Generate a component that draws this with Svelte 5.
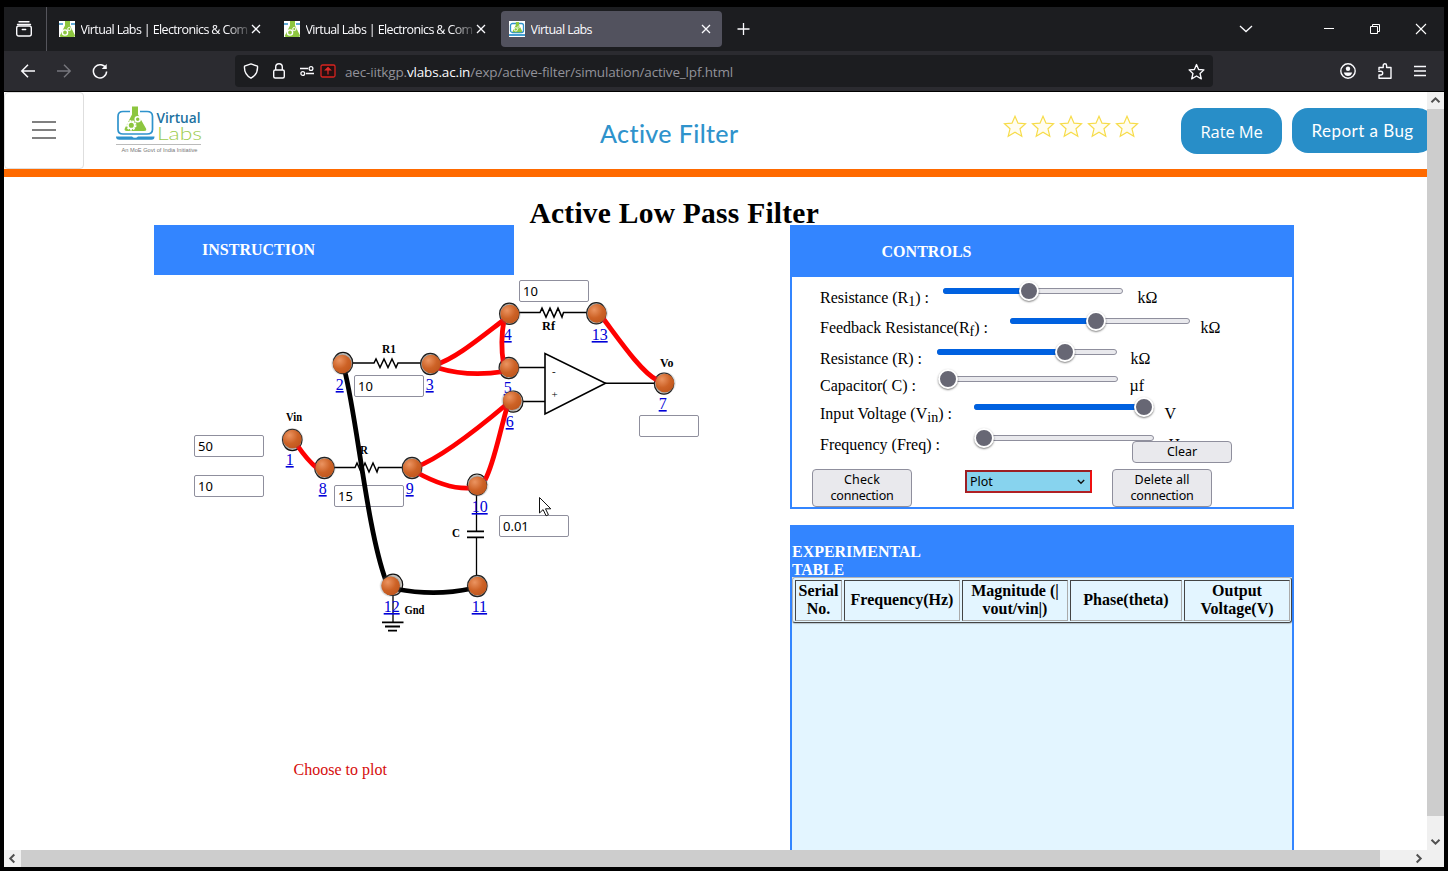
<script>
  // Spreads the letters of a text so that it takes exactly the given width.
  function fit(node, width) {
    const natural = node.getBoundingClientRect().width;
    const letters = node.textContent.length;
    node.style.letterSpacing = `${(width - natural) / letters}px`;
  }

  const tabs = [
    { title: 'Virtual Labs | Electronics & Com', width: 167, active: false },
    { title: 'Virtual Labs | Electronics & Com', width: 167, active: false },
    { title: 'Virtual Labs', width: 61.5, active: true }
  ];

  const sliders = [
    { label: 'Resistance (R', sub: '1', end: ') :', text: 109, lead: 123, knob: 86, fill: 86, gap: 14, unit: 'kΩ', height: 30 },
    { label: 'Feedback Resistance(R', sub: 'f', end: ') :', text: 168, lead: 190, knob: 86, fill: 86, gap: 10, unit: 'kΩ', height: 30 },
    { label: 'Resistance (R) :', sub: '', end: '', text: 102, lead: 117, knob: 128, fill: 128, gap: 13, unit: 'kΩ', height: 32 },
    { label: 'Capacitor( C) :', sub: '', end: '', text: 96, lead: 118, knob: 10, fill: 0, gap: 11, unit: 'µf', height: 22 },
    { label: 'Input Voltage (V', sub: 'in', end: ') :', text: 132, lead: 154, knob: 170, fill: 170, gap: 10, unit: 'V', height: 34 },
    { label: 'Frequency (Freq) :', sub: '', end: '', text: 120, lead: 154, knob: 10, fill: 0, gap: 14, unit: 'Hz', height: 28 }
  ];

  const columns = [
    ['Serial', 'No.'],
    ['Frequency(Hz)'],
    ['Magnitude (|', 'vout/vin|)'],
    ['Phase(theta)'],
    ['Output', 'Voltage(V)']
  ];

  // Ring centre (rx, ry), ball centre (x, y), label start (lx, ly).
  const nodes = [
    { n: 1, rx: 292.3, ry: 440, x: 292.3, y: 439, lx: 285.7, ly: 465 },
    { n: 2, rx: 343, ry: 363, x: 342.2, y: 364, lx: 335.7, ly: 390 },
    { n: 3, rx: 430.3, ry: 364, x: 431.2, y: 364, lx: 425.7, ly: 390 },
    { n: 4, rx: 509.3, ry: 313.8, x: 509.8, y: 314, lx: 503.7, ly: 340 },
    { n: 5, rx: 508.8, ry: 368, x: 509.3, y: 367.8, lx: 503.7, ly: 393 },
    { n: 6, rx: 513.3, ry: 401.6, x: 512.2, y: 400.7, lx: 505.7, ly: 427 },
    { n: 7, rx: 664, ry: 383.6, x: 664.8, y: 383, lx: 658.7, ly: 409 },
    { n: 8, rx: 324.4, ry: 468, x: 324.8, y: 467.8, lx: 318.7, ly: 494 },
    { n: 9, rx: 412, ry: 468, x: 412.2, y: 468, lx: 405.7, ly: 494 },
    { n: 10, rx: 477, ry: 484.6, x: 477.6, y: 485.7, lx: 471.7, ly: 512 },
    { n: 11, rx: 477.3, ry: 586, x: 477.5, y: 586, lx: 471.7, ly: 612 },
    { n: 12, rx: 393, ry: 584.8, x: 390.6, y: 585.8, lx: 383.7, ly: 612 },
    { n: 13, rx: 596.3, ry: 313.3, x: 597, y: 313.4, lx: 591.7, ly: 340 }
  ];

  const redWires = [
    'M436 364.5 C455 359 480 338 505 319',
    'M438 368 C458 374 482 375 504 371.5',
    'M504 320 Q500 342 503.5 364',
    'M602 317 C618 338 641 372 657 380',
    'M297 445 Q308 461 317 468',
    'M416 467 C438 459 475 431 507 404',
    'M416 472 C434 482 452 489.5 471 488',
    'M508 404 C500 430 494 464 485 480'
  ];
  const blackWires = ['M344.5 370 C357 418 367 530 386 581', 'M396 589 Q435 596.5 472 588.5'];

  const labels = [
    { t: 'R1', x: 382, y: 353, w: 14 },
    { t: 'Rf', x: 542, y: 330, w: 13 },
    { t: 'Vo', x: 660, y: 367, w: 13.5 },
    { t: 'Vin', x: 286, y: 420.5, w: 16 },
    { t: 'R', x: 360, y: 454, w: 8 },
    { t: 'C', x: 452, y: 536.5, w: 8 },
    { t: 'Gnd', x: 404.5, y: 614, w: 20 }
  ];

  // Offsets from the canvas corner.
  const fields = [
    { x: 365, y: 5, w: 70, v: '10' },
    { x: 200, y: 100, w: 70, v: '10' },
    { x: 40, y: 160, w: 70, v: '50' },
    { x: 40, y: 200, w: 70, v: '10' },
    { x: 180, y: 210, w: 70, v: '15' },
    { x: 345, y: 240, w: 70, v: '0.01' },
    { x: 485, y: 140, w: 60, v: '' }
  ];
  const star = 'M11 1.2 L14 8.2 L21.5 8.7 L16 13.8 L17.8 21.3 L11 17.3 L4.2 21.3 L6 13.8 L0.5 8.7 L8 8.2 Z';
</script>

{#snippet flask()}
  <path d="M6 0h5v4.500l4.800 9.500q.6 2-1.400 2H2.200q-1.900 0-1-2L6 4.500z" fill="#8dc63f" />
  <circle cx="6" cy="11.500" r="2.600" fill="none" stroke="#fff" stroke-width="1.400" />
  <circle cx="10.300" cy="8" r="1.600" fill="none" stroke="#fff" stroke-width="1" />
{/snippet}

<div class="window">
  <div class="tabbar">
    <div class="recent">
      <svg width="18" height="18" viewBox="0 0 18 18" fill="none" stroke="#fbfbfe" stroke-width="1.4" stroke-linecap="round">
        <path d="M4 1.700h10M2.500 4.500h13" /><rect x="1.700" y="6" width="14.600" height="10" rx="2" /><path d="M7.300 9.500h3.400" />
      </svg>
    </div>
    {#each tabs as tab}
      <div class="tab" class:active={tab.active}>
        <svg class="fav" width="16" height="16" viewBox="0 0 16 16">
          <rect width="16" height="16" fill="#fff" />
          {#if tab.active}
            <rect x="1.500" y="2.500" width="13" height="9" rx="2" fill="none" stroke="#2f93cc" stroke-width="1.300" />
            <path d="M0 14h16" stroke="#2f93cc" stroke-width="1.800" />
            <g transform="translate(3 1) scale(.64)">{@render flask()}</g>
          {:else}
            <path d="M0 3h4M12 3h4" stroke="#2f93cc" stroke-width="1.500" />
            {@render flask()}
          {/if}
        </svg>
        <span class="tabtext" class:fade={!tab.active}><span use:fit={tab.width}>{tab.title}</span></span>
        <svg width="10" height="10" viewBox="0 0 10 10" stroke="#fbfbfe" stroke-width="1.300"><path d="M1 1l8 8M9 1l-8 8" /></svg>
      </div>
    {/each}
    <svg class="plus" width="14" height="14" viewBox="0 0 14 14" stroke="#fbfbfe" stroke-width="1.300"><path d="M7.500 1v12M1.500 7h12" /></svg>
    <div class="wincontrols">
      <svg width="14" height="14" viewBox="0 0 14 14" fill="none" stroke="#fbfbfe" stroke-width="1.300"><path d="M1 4l6 5.500L13 4" /></svg>
      <svg class="min" width="12" height="14" viewBox="0 0 12 14" stroke="#fff" stroke-width="1"><path d="M1 6.500h10" /></svg>
      <svg class="restore" width="12" height="12" viewBox="0 0 12 12" fill="none" stroke="#fff" stroke-width="1"><path d="M1.500 3.500h7v7h-7zM3.500 3.500v-2h7v7h-2" /></svg>
      <svg class="quit" width="12" height="12" viewBox="0 0 12 12" stroke="#fff" stroke-width="1.100"><path d="M1 1l10 10M11 1L1 11" /></svg>
    </div>
  </div>

  <div class="toolbar">
    <svg width="16" height="16" viewBox="0 0 16 16" fill="none" stroke="#fbfbfe" stroke-width="1.500"><path d="M15 8H1.800M8 1.800L1.800 8 8 14.200" /></svg>
    <svg width="16" height="16" viewBox="0 0 16 16" fill="none" stroke="#77777d" stroke-width="1.400"><path d="M1 8h13.200M8 1.800L14.200 8 8 14.200" /></svg>
    <svg width="16" height="16" viewBox="0 0 16 16" fill="none" stroke="#fbfbfe" stroke-width="1.500"><path d="M14 5.500A6.600 6.600 0 1 0 14.600 8.500" /><path d="M14.700 1v5h-5z" fill="#fbfbfe" stroke="none" /></svg>
    <div class="urlbar">
      <svg width="16" height="16" viewBox="0 0 16 16" fill="none" stroke="#fbfbfe" stroke-width="1.400"><path d="M8 .9l6.500 2.300q.6 8-6.500 12Q.9 11.200 1.500 3.200z" stroke-linejoin="round" /></svg>
      <svg class="lock" width="14" height="16" viewBox="0 0 14 16" fill="none" stroke="#fbfbfe" stroke-width="1.400"><rect x="1.700" y="7" width="10.600" height="8" rx="1.500" /><path d="M3.700 7V4a3.300 3.300 0 0 1 6.600 0v3" /></svg>
      <svg class="perm" width="14" height="12" viewBox="0 0 14 12" fill="none" stroke="#fbfbfe" stroke-width="1.300"><path d="M0 3.500h8M6 8.500h8" /><circle cx="11" cy="3.500" r="1.900" /><circle cx="2.800" cy="8.500" r="1.900" /></svg>
      <svg class="blocked" width="16" height="14" viewBox="0 0 16 14"><rect x="1" y="1" width="14" height="12" rx="1.500" fill="#251011" stroke="#d8231f" stroke-width="1.300" /><path d="M8 3v7.500M5.500 6L8 3.500 10.500 6z" stroke="#e22b28" stroke-width="1.200" fill="#e22b28" /></svg>
      <span class="url"><span use:fit={388}>aec-iitkgp.<b>vlabs.ac.in</b>/exp/active-filter/simulation/active_lpf.html</span></span>
      <svg class="bookmark" width="17" height="17" viewBox="-1 -1 24 24" fill="none" stroke="#fbfbfe" stroke-width="1.900" stroke-linejoin="round"><path d={star} /></svg>
    </div>
    <div class="tools">
      <svg width="16" height="16" viewBox="0 0 16 16"><circle cx="8" cy="8" r="7.200" fill="none" stroke="#fbfbfe" stroke-width="1.400" /><circle cx="8" cy="5.800" r="2.200" fill="#fbfbfe" /><path d="M3.800 9.500h8.400q-1 3.500-4.200 3.500t-4.200-3.500" fill="#fbfbfe" /></svg>
      <svg width="16" height="16" viewBox="0 0 16 16" fill="none" stroke="#fbfbfe" stroke-width="1.400" stroke-linejoin="round"><path d="M2 7V4.500h4.200V2.500a1.700 1.700 0 0 1 3.400 0v2h4.400V15.200H2V12h1.800a1.900 1.900 0 0 0 0-3.800H1.200" /></svg>
      <svg width="14" height="16" viewBox="0 0 14 16" stroke="#fbfbfe" stroke-width="1.300"><path d="M1 3.500h12M1 8h12M1 12.500h12" /></svg>
    </div>
  </div>

  <div class="viewport">
    <div class="page">
      <header>
        <div class="burger"><i></i><i></i><i></i></div>
        <svg class="logo" width="88" height="50" viewBox="115 105 88 50">
          <path d="M130 111.500h-7q-5 0-5 5v13q0 4.500 5 4.500h24q5.500 0 5.500-4.500v-13q0-5-5.500-5h-7" fill="none" stroke="#2f93cc" stroke-width="1.700" />
          <path d="M116 136.500h16q1 1.200 3 1.200t3-1.200h16.500q0 3.300-3 3.300h-32q-3.500 0-3.500-3.300" fill="#2f93cc" />
          <path d="M132 106.500h6v8l8 14q1 2.500-2 2.500h-17q-3.500 0-2-3l7-13.500z" fill="#8dc63f" />
          <circle cx="131.300" cy="125.300" r="4.200" fill="none" stroke="#fff" stroke-width="2" stroke-dasharray="1.900 1" />
          <circle cx="131.300" cy="125.300" r="3.300" fill="none" stroke="#fff" stroke-width="1.500" />
          <circle cx="137.700" cy="119.300" r="2.500" fill="none" stroke="#fff" stroke-width="1.500" />
          <text x="156.500" y="123.300" class="lv" textLength="44" lengthAdjust="spacingAndGlyphs">Virtual</text>
          <text x="157" y="140" class="ll" textLength="45" lengthAdjust="spacingAndGlyphs">Labs</text>
          <path d="M116 144.500h85" stroke="#aaa" stroke-width=".8" />
          <text x="121.500" y="151.500" class="lt" textLength="76" lengthAdjust="spacingAndGlyphs">An MoE Govt of India Initiative</text>
        </svg>
        <div class="name"><span use:fit={139}>Active Filter</span></div>
        <div class="stars">
          {#each Array(5) as _}
            <svg width="24" height="24" viewBox="-1 -1 24 24" fill="#fffdf0" stroke="#f7dc4a" stroke-width="1.200"><path d={star} /></svg>
          {/each}
        </div>
        <div class="pill rate"><span use:fit={62}>Rate Me</span></div>
        <div class="pill bug"><span use:fit={102}>Report a Bug</span></div>
      </header>

      <h1><span use:fit={289.5}>Active Low Pass Filter</span></h1>

      <main>
        <section class="left">
          <div class="instruction"><span use:fit={113}>INSTRUCTION</span></div>
          <div class="canvas">
            {#each fields as f}
              <input value={f.v} style="left:{f.x}px;top:{f.y}px;width:{f.w}px" />
            {/each}
            <svg class="circuit" width="636" height="575" viewBox="154 275 636 575">
              <defs>
                <radialGradient id="ball" cx=".35" cy=".3" r=".75">
                  <stop offset="0" stop-color="#eb9461" /><stop offset=".6" stop-color="#cd6226" /><stop offset="1" stop-color="#c0571d" />
                </radialGradient>
                <radialGradient id="halo"><stop offset=".7" stop-color="#555" stop-opacity=".6" /><stop offset="1" stop-color="#777" stop-opacity="0" /></radialGradient>
              </defs>
              <g fill="none" stroke="#000" stroke-width="1.800">
                <path d="M352 363h22l2 -4 4 8.500 4 -8.500 4 8.500 4 -8.500 4 8.500 2 -4.500H421" stroke-width="1.500" />
                <path d="M519 312.600h21l2 -4.500 4 9 4 -9 4 9 4 -9 4 9 1.500 -4.500H587" stroke-width="1.500" />
                <path d="M334 467.500h21l2 -4.500 4 9 4 -9 4 9 4 -9 4 9 1.500 -4.500H403" stroke-width="1.500" />
                <path d="M518 367.500h27M522 401.400h23M605 383.300h50" stroke-width="1.500" />
                <path d="M545 353.500V414L605.500 383.300z" stroke-width="1.600" />
                <path d="M476.500 494v37M476.500 537.500V576M393 595v27" stroke-width="1.300" />
                <path d="M467 531.300h17M467 537.300h17M382 622.400h21.500M385 626.500h15M388 630.600h9" />
              </g>
              {#each labels as l}
                <text class="lab" x={l.x} y={l.y} textLength={l.w} lengthAdjust="spacingAndGlyphs">{l.t}</text>
              {/each}
              <text class="sign" x="552" y="375">-</text>
              <text class="sign" x="551.500" y="398">+</text>
              {#each nodes as n}
                <text class="link" x={n.lx} y={n.ly}>{n.n}</text>
              {/each}
              {#each nodes as n}
                <ellipse cx={n.rx} cy={n.ry} rx="9.700" ry="10.600" fill="#d4cfc8" stroke="#111" stroke-width="1.200" />
              {/each}
              {#each redWires as d}<path {d} fill="none" stroke="#f00" stroke-width="4.800" />{/each}
              {#each blackWires as d}<path {d} fill="none" stroke="#000" stroke-width="4.800" />{/each}
              {#each nodes as n}
                <circle cx={n.x} cy={n.y} r="11.500" fill="url(#halo)" />
                <circle cx={n.x} cy={n.y} r="9.300" fill="url(#ball)" />
              {/each}
              <text class="choose" x="293.500" y="775">Choose to plot</text>
              <path d="M539.500 497.500v15.500l3.600-3.400 3 6.200 2.300-1.100-2.900-5.900h5.300z" fill="#fff" stroke="#111" stroke-width="1" />
            </svg>
          </div>
        </section>

        <section class="right">
          <div class="controls">
            <div class="chead"><span use:fit={90}>CONTROLS</span></div>
            <div class="rows">
              {#each sliders as s}
                <div class="row" style="height:{s.height}px">
                  <div class="label" style="width:{s.lead}px"><span use:fit={s.text}>{s.label}{#if s.sub}<sub>{s.sub}</sub>{/if}{s.end}</span></div>
                  <div class="slider">
                    <div class="fill" style="width:{s.fill}px"></div>
                    <div class="knob" style="left:{s.knob}px"></div>
                  </div>
                  <span style="margin-left:{s.gap}px">{s.unit}</span>
                </div>
              {/each}
            </div>
            <div class="actions">
              <button class="tall"><span use:fit={36}>Check</span><br /><span use:fit={63}>connection</span></button>
              <div class="select"><span>Plot</span><svg width="10" height="8" viewBox="0 0 10 8" fill="none" stroke="#111" stroke-width="1.400"><path d="M1.800 2L5 5.200 8.200 2" /></svg></div>
              <button class="tall"><span use:fit={55}>Delete all</span><br /><span use:fit={63}>connection</span></button>
            </div>
            <button class="clear"><span use:fit={30}>Clear</span></button>
          </div>

          <div class="experiment">
            <div class="ehead"><span use:fit={129}>EXPERIMENTAL</span><span use:fit={52}>TABLE</span></div>
            <div class="table">
              {#each columns as c}
                <div class="cell">{#each c as line}<span>{line}</span>{/each}</div>
              {/each}
            </div>
          </div>
        </section>
      </main>
    </div>

    <div class="vbar">
      <svg width="17" height="17" viewBox="0 0 17 17" fill="none" stroke="#505050" stroke-width="2"><path d="M4.500 10.300l4-4 4 4" /></svg>
      <div class="vthumb"></div>
      <svg class="down" width="17" height="17" viewBox="0 0 17 17" fill="none" stroke="#505050" stroke-width="2"><path d="M4.500 6.700l4 4 4-4" /></svg>
    </div>
    <div class="hbar">
      <svg width="17" height="17" viewBox="0 0 17 17" fill="none" stroke="#505050" stroke-width="2"><path d="M10.300 4.500l-4 4 4 4" /></svg>
      <div class="hthumb"></div>
      <svg class="fwd" width="17" height="17" viewBox="0 0 17 17" fill="none" stroke="#505050" stroke-width="2"><path d="M6.700 4.500l4 4-4 4" /></svg>
    </div>
  </div>
</div>

<style>
  :global(body) { background: #000; overflow: hidden; }
  * { box-sizing: border-box; }
  svg { display: block; flex: none; }
  .window { width: 1448px; height: 871px; padding: 7px 4px 4px; background: #000; font-family: 'Open Sans', sans-serif; white-space: nowrap; }
  .tabbar { height: 44px; background: #1c1d20; display: flex; align-items: center; color: #fbfbfe; font-size: 12.500px; }
  .recent { width: 43px; height: 44px; border-right: 1px solid #55555c; display: flex; align-items: center; padding-left: 11px; margin-right: 4px; }
  .tab { width: 221px; height: 36px; margin-right: 4px; border-radius: 4px; display: flex; align-items: center; padding: 0 11px 0 8px; }
  .tab.active { background: #52525e; }
  .tabtext { flex: 1; margin: 0 0 0 5.500px; overflow: hidden; line-height: 20px; padding-top: 1px; }
  .fade { -webkit-mask-image: linear-gradient(to right, #000 145px, transparent 172px); mask-image: linear-gradient(to right, #000 145px, transparent 172px); }
  .plus { margin-left: 10px; }
  .wincontrols { margin-left: auto; display: flex; align-items: center; padding-right: 17px; }
  .min { margin-left: 70px; }
  .restore { margin-left: 34px; }
  .quit { margin-left: 34px; }
  .toolbar { height: 40px; background: #2b2b30; display: flex; align-items: center; padding-left: 16px; gap: 20px; }
  .urlbar { width: 978px; height: 32px; margin-left: 107px; background: #1c1d20; border-radius: 4px; display: flex; align-items: center; padding: 0 8px 0 8px; color: #92929a; }
  .lock { margin-left: 13px; }
  .perm { margin-left: 14px; }
  .blocked { margin-left: 6px; }
  .url { margin-left: 9px; font-size: 13.500px; line-height: 20px; padding-top: 1px; }
  .url b { font-weight: 400; color: #fbfbfe; }
  .bookmark { margin-left: auto; }
  .tools { margin-left: auto; padding-right: 17px; display: flex; gap: 20.500px; }
  .viewport { margin-top: 1px; width: 1440px; height: 775px; display: grid; grid-template: 758px 17px / 1423px 17px; background: #f0f0f0; }
  .page { background: #fff; overflow: hidden; display: flex; flex-direction: column; font: 16px 'Liberation Serif', serif; color: #000; }
  header { height: 85px; flex: none; border-bottom: 8px solid #ff6a00; display: flex; align-items: flex-start; font-family: Lato, sans-serif; }
  .burger { width: 80px; height: 77px; flex: none; border: 1px solid #dedede; border-radius: 4px; display: flex; flex-direction: column; gap: 6px; padding: 28px 0 0 27px; }
  .burger i { width: 24px; height: 2px; background: #808080; }
  .logo { margin: 13px 0 0 31px; overflow: visible; }
  .lv { font: 600 15px 'Open Sans', sans-serif; fill: #20719f; }
  .ll { font: 300 18px Lato, sans-serif; fill: #9ccc4d; }
  .lt { font: 6px 'Liberation Sans', sans-serif; fill: #777; }
  .name { margin: 26px 0 0 397px; width: 140px; font-size: 25px; line-height: 30px; font-weight: 500; color: #2f93cc; }
  .stars { display: flex; gap: 4px; margin: 21.500px 0 0 264px; }
  .pill { background: #288ec8; color: #fff; border-radius: 16px; flex: none; display: flex; align-items: center; margin-top: 16px; padding-left: 20px; }
  .rate { width: 101px; height: 46px; margin-left: 42px; font: 16.500px 'Open Sans', sans-serif; padding-top: 1px; }
  .bug { width: 142px; height: 45px; margin-left: 10px; font-size: 17px; }
  h1 { margin: 0; height: 48px; flex: none; padding-left: 525.500px; font-size: 29.500px; line-height: 32px; padding-top: 20px; }
  main { flex: 1; display: flex; padding-left: 150px; }
  .left { width: 636px; display: flex; flex-direction: column; }
  .instruction { width: 360px; height: 50px; background: #3385ff; color: #fff; font-weight: 700; line-height: 50px; padding-left: 48px; }
  .canvas { position: relative; height: 575px; }
  .circuit { position: absolute; left: 0; top: 0; pointer-events: none; }
  input { position: absolute; height: 22px; border: 1px solid #8f8f9d; border-radius: 2px; padding: 0 4px 1px 3px; background: #fff; color: #000; font: 13px 'Noto Sans', sans-serif; outline: none; }
  .lab { font: 700 12px 'Liberation Serif', serif; }
  .sign { font: 11px 'Liberation Serif', serif; }
  .link { font-size: 16px; fill: #0000d8; text-decoration: underline; }
  .choose { font-size: 16px; fill: #d60c0c; }
  .right { width: 504px; display: flex; flex-direction: column; }
  .controls { position: relative; height: 284px; border: 2px solid #3385ff; border-top: 0; }
  .chead { height: 52px; background: #3385ff; color: #fff; font-weight: 700; line-height: 54px; padding-left: 89.500px; }
  .rows { padding: 6px 0 0 28px; }
  .row { display: flex; align-items: center; line-height: 18px; }
  .row > span { padding-left: .5px; }
  .label { flex: none; }
  sub { font-size: 14px; line-height: 0; vertical-align: -3px; }
  .slider { position: relative; width: 180px; height: 6px; margin-bottom: 14px; border: 1px solid #8f8f9d; border-radius: 3px; background: #e9e9ed; flex: none; }
  .fill { height: 6px; margin: -1px; border-radius: 3px; background: #0061e0; }
  .knob { position: absolute; top: -8px; width: 20px; height: 20px; margin-left: -11px; border-radius: 50%; background: #676774; border: 2px solid #fff; box-shadow: 0 1px 2px rgba(0, 0, 0, .5); }
  .actions { display: flex; align-items: flex-start; padding: 10px 0 0 20px; }
  button { font: 12.500px/16px 'Noto Sans', sans-serif; color: #000; background: #e9e9ed; border: 1px solid #8f8f9d; border-radius: 4px; padding: 0; width: 100px; text-align: center; }
  .tall { height: 38px; }
  .select { width: 127px; height: 23px; margin: 1px 20px 0 53px; background: #87d3ee; border: 2px solid; border-color: #9c1f24 #f01010 #b02024 #9c1f24; display: flex; align-items: center; justify-content: space-between; padding: 0 4px 0 3px; font: 12.500px 'Noto Sans', sans-serif; }
  .clear { position: absolute; left: 340px; top: 216px; height: 22px; }
  .experiment { margin-top: 16px; flex: 1; border: 2px solid #3385ff; border-width: 0 2px; background: #e3f5ff; }
  .ehead { height: 52px; background: #3385ff; color: #fff; font-weight: 700; line-height: 18px; padding-top: 18px; display: flex; flex-direction: column; align-items: flex-start; }
  .table { height: 46px; display: grid; grid-template-columns: 47px 116px 106px 112px 106px; gap: 2px; padding: 2px; border: 1px solid; border-color: #b5b5b5 #444 #444 #b5b5b5; border-radius: 3px; box-shadow: 0 1px 1px rgba(0, 0, 0, .2); }
  .cell { border: 1px solid; border-color: #444 #aaa #aaa #444; display: flex; flex-direction: column; align-items: center; justify-content: center; font-weight: 700; line-height: 18px; height: 41px; padding-bottom: 2px; }
  .vbar { background: #f0f0f0; display: flex; flex-direction: column; }
  .vthumb { height: 707px; background: #cdcdcd; }
  .down { margin-top: auto; }
  .hbar { grid-column: 1 / 3; background: #f0f0f0; display: flex; }
  .hthumb { width: 1359px; background: #cdcdcd; }
  .fwd { margin-left: auto; margin-right: 17px; }
</style>
